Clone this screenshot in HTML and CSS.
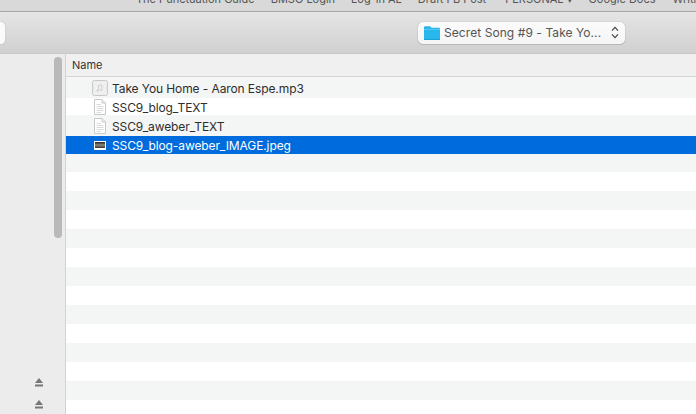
FILE: index.html
```html
<!DOCTYPE html>
<html lang="en">
<head>
<meta charset="utf-8">
<title>Open file</title>
<link rel="stylesheet" href="styles.css">
</head>
<body>
<div class="bookmarks">
  <span class="bm bm-1">The Punctuation Guide</span>
  <span class="bm bm-2">BMSO Login</span>
  <span class="bm bm-3">Log-in AL</span>
  <span class="bm bm-4">Draft FB Post</span>
  <span class="bm bm-5">PERSONAL ▾</span>
  <span class="bm bm-6">Google Docs</span>
  <span class="bm bm-7">Writing</span>
</div>
<div class="toolbar">
  <div class="back-btn"></div>
  <div class="path-select">
    <svg class="folder" width="16" height="14" viewBox="0 0 16 14">
      <path d="M0 1.8C0 .8 .5 .3 1.3 .3H5.5C6.2 .3 6.5 .6 6.9 1.1L7.5 1.8H14.8C15.5 1.8 16 2.3 16 3V12.8C16 13.5 15.5 14 14.8 14H1.2C.5 14 0 13.5 0 12.8Z" fill="#27b7ec"/>
      <path d="M0 3.2H16V4H0Z" fill="#63d0f6"/>
      <path d="M0 13H16V14H0Z" fill="#1a9fd6"/>
    </svg>
    <span class="path-label">Secret Song #9 - Take Yo...</span>
    <svg class="updown" width="8" height="13" viewBox="0 0 8 13">
      <path d="M1 4.6L4 1.4L7 4.6M1 8.4L4 11.6L7 8.4" fill="none" stroke="#444" stroke-width="1.2"/>
    </svg>
  </div>
</div>
<div class="main">
  <aside class="sidebar">
    <div class="scroll-thumb"></div>
    <div class="ejects">
      <svg class="eject" width="8" height="9" viewBox="0 0 8 9"><path d="M4 0L8 5H0ZM0 6.6H8V8.6H0Z" fill="#777"/></svg>
      <svg class="eject" width="8" height="9" viewBox="0 0 8 9"><path d="M4 0L8 5H0ZM0 6.6H8V8.6H0Z" fill="#777"/></svg>
    </div>
  </aside>
  <section class="list">
    <div class="list-head">Name</div>
    <div class="rows">
      <div class="row alt row-21">
        <svg class="ico" width="16" height="16" viewBox="0 0 16 16"><rect x=".5" y=".5" width="15" height="15" rx="2" fill="#efefef" stroke="#c6c6c6"/><path d="M6.5 10.5V5.5L10 5V9.8" fill="none" stroke="#cfcfcf"/><circle cx="5.6" cy="10.6" r="1.1" fill="#cfcfcf"/><circle cx="9.1" cy="10" r="1.1" fill="#cfcfcf"/></svg>
        <span>Take You Home - Aaron Espe.mp3</span>
      </div>
      <div class="row row-17">
        <svg class="ico" width="16" height="16" viewBox="0 0 16 16"><path d="M2.5 .5H10L13.5 4V15.5H2.5Z" fill="#fff" stroke="#c8c8c8"/><path d="M10 .5V4H13.5" fill="#eee" stroke="#c8c8c8"/><path d="M4.5 5.5H9M4.5 7.5H11.5M4.5 9.5H11.5M4.5 11.5H11.5M4.5 13.5H9" stroke="#dadada"/></svg>
        <span>SSC9_blog_TEXT</span>
      </div>
      <div class="row alt row-21">
        <svg class="ico" width="16" height="16" viewBox="0 0 16 16"><path d="M2.5 .5H10L13.5 4V15.5H2.5Z" fill="#fff" stroke="#c8c8c8"/><path d="M10 .5V4H13.5" fill="#eee" stroke="#c8c8c8"/><path d="M4.5 5.5H9M4.5 7.5H11.5M4.5 9.5H11.5M4.5 11.5H11.5M4.5 13.5H9" stroke="#dadada"/></svg>
        <span>SSC9_aweber_TEXT</span>
      </div>
      <div class="row selected row-18">
        <svg class="ico" width="16" height="16" viewBox="0 0 16 16"><defs><linearGradient id="photo" x1="0" y1="0" x2="0" y2="1"><stop offset="0" stop-color="#1f1f1f"/><stop offset=".5" stop-color="#8f877a"/><stop offset="1" stop-color="#3a342e"/></linearGradient></defs><rect x="2" y="4" width="12" height="9" fill="#fff"/><rect x="3" y="5" width="10" height="6" fill="url(#photo)"/></svg>
        <span>SSC9_blog-aweber_IMAGE.jpeg</span>
      </div>
      <div class="row alt row-18"></div>
      <div class="row"></div>
      <div class="row alt"></div>
      <div class="row"></div>
      <div class="row alt"></div>
      <div class="row"></div>
      <div class="row alt"></div>
      <div class="row"></div>
      <div class="row alt"></div>
      <div class="row"></div>
      <div class="row alt"></div>
      <div class="row"></div>
      <div class="row alt"></div>
      <div class="row"></div>
    </div>
  </section>
</div>
</body>
</html>
```
FILE: styles.css
```css
* { box-sizing: border-box; }
html, body { margin: 0; height: 100%; overflow: hidden; }
body {
  width: 696px;
  height: 414px;
  display: flex;
  flex-direction: column;
  font-family: Inter, "Liberation Sans", sans-serif;
  background: #fff;
}
.bookmarks {
  height: 12px;
  flex: none;
  overflow: hidden;
  background: #d9d9d9;
  border-bottom: 1px solid #a9a9a9;
  display: flex;
  align-items: flex-end;
  font-size: 11px;
  line-height: 14px;
  color: #555;
  white-space: nowrap;
}
.bookmarks .bm { flex: none; margin-bottom: 5px; }
.bm-1 { margin-left: 136px; }
.bm-2 { margin-left: 16px; }
.bm-3 { margin-left: 16px; }
.bm-4 { margin-left: 16px; }
.bm-5 { margin-left: 19px; }
.bm-6 { margin-left: 16px; }
.bm-7 { margin-left: 17px; }
.toolbar {
  height: 42px;
  flex: none;
  background: linear-gradient(#e5e5e5, #d0d0d0);
  border-bottom: 1px solid #c8c8c8;
  display: flex;
  align-items: center;
  justify-content: space-between;
  padding-right: 71px;
}
.back-btn {
  width: 5px;
  height: 22px;
  background: #fbfbfb;
  border-radius: 0 4px 4px 0;
  box-shadow: 0 0 1px rgba(0,0,0,.35);
}
.path-select {
  width: 207px;
  height: 22px;
  background: linear-gradient(#fbfbfb, #f5f5f5);
  border-radius: 5px;
  box-shadow: 0 0 1px rgba(0,0,0,.45), 0 1px 1px rgba(0,0,0,.1);
  display: flex;
  align-items: center;
  padding: 0 6px;
  font-size: 12px;
  letter-spacing: .07px;
  color: #555;
  white-space: nowrap;
}
.folder { flex: none; }
.path-label { flex: 1; margin-left: 4px; overflow: hidden; }
.updown { flex: none; }
.main { flex: 1; display: flex; min-height: 0; }
.sidebar {
  width: 66px;
  flex: none;
  background: #ececec;
  border-right: 1px solid #d2d2d2;
  display: flex;
  flex-direction: column;
  align-items: flex-end;
  justify-content: space-between;
  padding: 3px 3px 0 0;
}
.scroll-thumb {
  width: 8px;
  height: 181px;
  background: #b9b9b9;
  border-radius: 4px;
}
.ejects {
  width: 100%;
  display: flex;
  flex-direction: column;
  align-items: flex-start;
  gap: 13px;
  padding-left: 35px;
  margin-bottom: 5px;
}
.eject { display: block; }
.list { flex: 1; min-width: 0; display: flex; flex-direction: column; }
.list-head {
  height: 23px;
  flex: none;
  padding: 0 6px;
  background: #f0f0f0;
  border-bottom: 1px solid #d5d5d5;
  font-size: 11px;
  line-height: 22px;
  color: #333;
}
.rows { flex: 1; overflow: hidden; }
.row {
  height: 19px;
  display: flex;
  align-items: center;
  gap: 4px;
  padding-left: 26px;
  font-size: 12px;
  letter-spacing: -.1px;
  color: #2e2e2e;
  background: #fff;
}
.row-17 { height: 17px; padding-top: 1px; }
.row-18 { height: 18px; }
.row-21 { height: 21px; padding-top: 1px; }
.row.alt { background: #f4f5f5; }
.row.selected { background: #006bdc; color: #fff; }
.ico { flex: none; }
```
